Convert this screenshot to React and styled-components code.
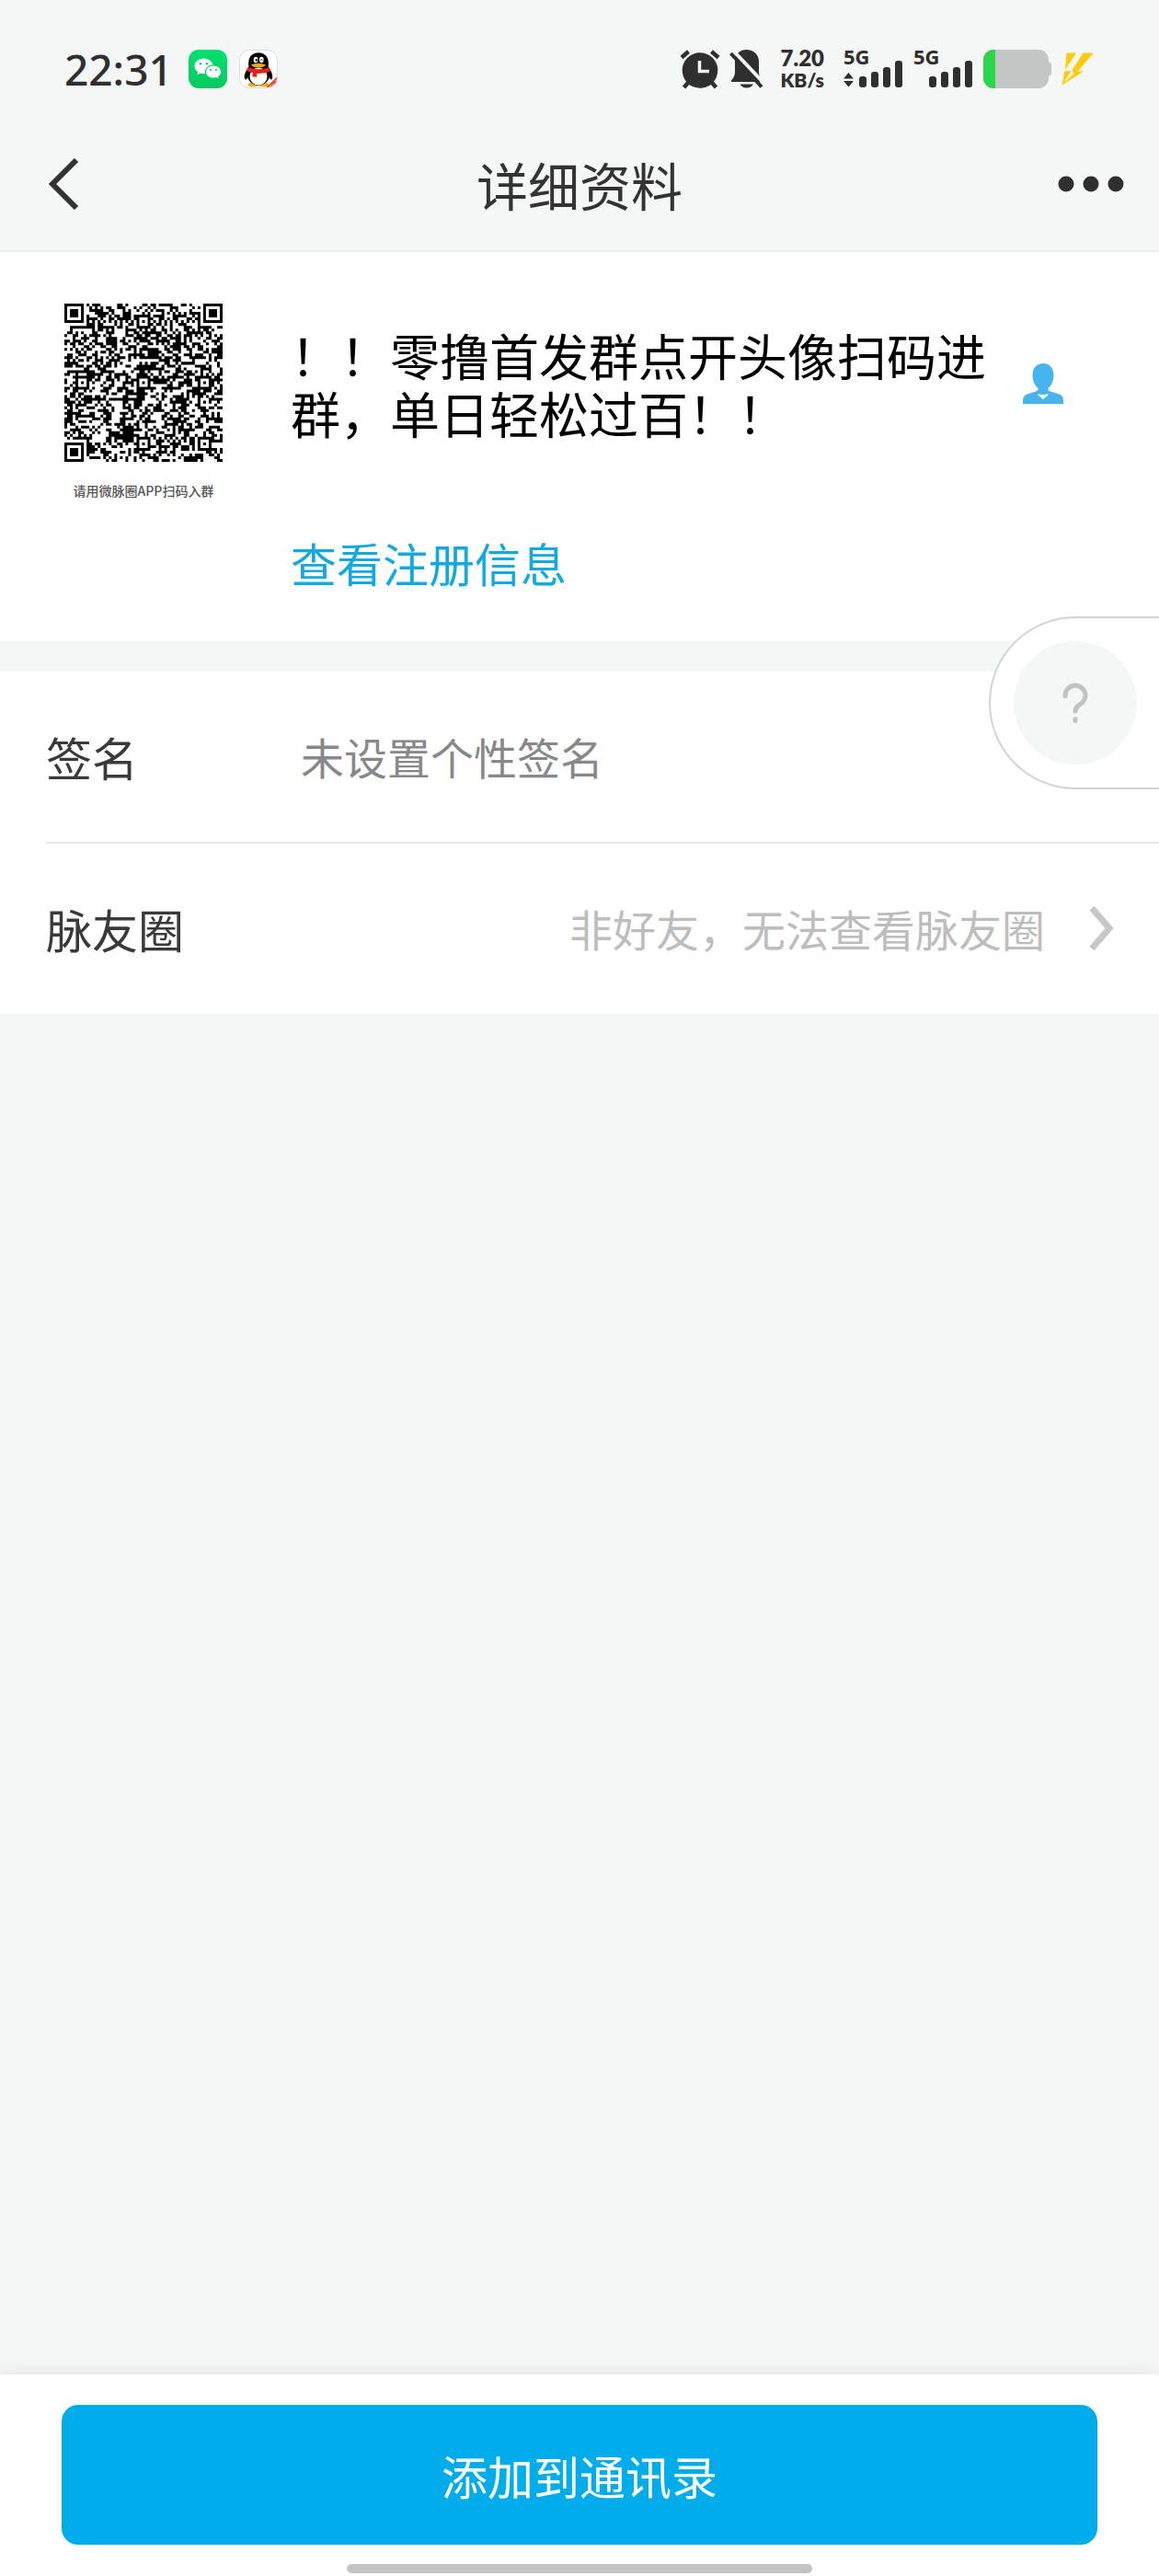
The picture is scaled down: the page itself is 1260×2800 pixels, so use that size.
import React from "react";
import styled, { createGlobalStyle } from "styled-components";

const QR_SIZE = 57;
const ALIGN = [6, 28, 50];
const DARK_BLOCKS = [
  [21, 44, 4, 6],
  [30, 16, 4, 4],
  [15, 12, 4, 3],
  [26, 30, 3, 5],
  [21, 3, 3, 4],
  [27, 22, 4, 2],
];
const LIGHT_BLOCKS = [
  [18, 9, 4, 3],
  [24, 20, 10, 1],
  [10, 47, 5, 3],
  [18, 35, 3, 4],
];

const ring = (x, y, cx, cy) => Math.max(Math.abs(x - cx), Math.abs(y - cy));

const inBlock = (x, y, blocks) =>
  blocks.some(([bx, by, w, h]) => x >= bx && x < bx + w && y >= by && y < by + h);

const buildQr = () => {
  let seed = 20731;
  let path = "";
  const corners = [
    [3, 3],
    [QR_SIZE - 4, 3],
    [3, QR_SIZE - 4],
  ];

  for (let y = 0; y < QR_SIZE; y++) {
    for (let x = 0; x < QR_SIZE; x++) {
      seed = (seed * 48271) % 2147483647;
      let dark = (seed >> 8) % 100 < 51;
      if (inBlock(x, y, DARK_BLOCKS)) dark = true;
      if (inBlock(x, y, LIGHT_BLOCKS)) dark = false;
      if (x === 6 || y === 6) dark = (x + y) % 2 === 0;

      ALIGN.forEach((ax) =>
        ALIGN.forEach((ay) => {
          const d = ring(x, y, ax, ay);
          if (d <= 2) dark = d !== 1;
        })
      );
      corners.forEach(([cx, cy]) => {
        const d = ring(x, y, cx, cy);
        if (d <= 4) dark = d !== 4 && d !== 2;
      });

      if (dark) path += `M${x} ${y}h1v1h-1z`;
    }
  }
  return path;
};

const qrPath = buildQr();

const WechatIcon = () => (
  <svg width="42" height="42" viewBox="0 0 42 42" aria-hidden="true">
    <defs>
      <linearGradient id="wechat" x1="0" y1="0" x2="0" y2="1">
        <stop offset="0" stopColor="#04e06e" />
        <stop offset="1" stopColor="#07c95f" />
      </linearGradient>
    </defs>
    <rect width="42" height="42" rx="11" fill="url(#wechat)" />
    <path d="M16.500 9.500c-5.600 0-10 3.700-10 8.300 0 2.600 1.400 4.900 3.600 6.400l-.9 3.100 3.500-1.900c1.200.4 2.500.6 3.800.6 5.600 0 10-3.700 10-8.200s-4.400-8.300-10-8.300z" fill="#fff" />
    <path d="M27 16.800c4.900 0 8.700 3.200 8.700 7.200 0 2.200-1.200 4.200-3 5.500l.7 2.700-3-1.500c-1.100.3-2.200.5-3.400.5-4.800 0-8.600-3.200-8.600-7.200s3.800-7.200 8.600-7.200z" fill="#fff" stroke="#07d264" strokeWidth="1.200" />
    <g fill="#07d264">
      <circle cx="13" cy="15.200" r="1.300" />
      <circle cx="20" cy="15.200" r="1.300" />
      <circle cx="24" cy="22" r="1.100" />
      <circle cx="30" cy="22" r="1.100" />
    </g>
  </svg>
);

const QqIcon = () => (
  <svg width="42" height="42" viewBox="0 0 42 42" aria-hidden="true">
    <defs>
      <clipPath id="qqClip">
        <rect x="1" y="1" width="40" height="40" rx="10" />
      </clipPath>
    </defs>
    <rect x=".5" y=".5" width="41" height="41" rx="10.500" fill="#fff" stroke="#dcdcdc" />
    <g clipPath="url(#qqClip)">
      <ellipse cx="15.500" cy="38" rx="6" ry="2.300" fill="#f9a80c" />
      <ellipse cx="26.500" cy="38" rx="6" ry="2.300" fill="#f9a80c" />
      <path d="M10.200 19C6 24.500 5 29 6.200 32c.8 1.200 2.600-.6 3.800-2.600h22c1.200 2 3 3.800 3.800 2.600 1.200-3 .2-7.500-4-13z" fill="#050505" />
      <ellipse cx="21" cy="28" rx="12" ry="10.500" fill="#050505" />
      <path d="M10.200 19.500V14C10.200 7.500 14.800 3.300 21 3.300S31.800 7.500 31.800 14v5.500z" fill="#050505" />
      <ellipse cx="21" cy="29" rx="9.500" ry="9.500" fill="#fff" />
      <ellipse cx="18" cy="11" rx="2.300" ry="3.300" fill="#fff" />
      <ellipse cx="24.300" cy="11" rx="2.300" ry="3.300" fill="#fff" />
      <ellipse cx="18.700" cy="11.300" rx="1" ry="1.500" />
      <path d="M23 11.500q1.200-2 2.500 0" stroke="#000" strokeWidth=".9" fill="none" />
      <path d="M12.800 16.500q8.200-3.500 16.400 0-2.400 3-8.200 3t-8.200-3z" fill="#f9a80c" />
      <path d="M9.300 19q11.700 4.600 23.400 0l1.300 4.200q-6 2.900-14.800 2.700v3.800l-4.800-.5.200-4.200q-3.600-.7-6.500-2z" fill="#e3201b" />
      <path d="M42 28.500V42H28.500z" fill="#e5442f" />
      <path d="M33 40l2-2m0 2.500l2.500-4m-.5 3l3-3.500m-1.500-1.500l2-2" stroke="#fff" strokeOpacity=".6" strokeWidth=".9" />
    </g>
  </svg>
);

const AlarmIcon = () => (
  <svg width="44" height="44" viewBox="0 0 44 44" aria-hidden="true">
    <circle cx="22" cy="23.500" r="19.300" fill="#2f2f2f" />
    <path d="M2 9.500L9.500 3M42 9.500L34.500 3M9 37l-4.500 5M35 37l4.500 5" stroke="#2f2f2f" strokeWidth="4.500" />
    <path d="M21.500 13v11.500H32" fill="none" stroke="#f4f7f6" strokeWidth="3.500" />
  </svg>
);

const MutedBellIcon = () => (
  <svg width="38" height="44" viewBox="0 0 38 44" aria-hidden="true">
    <path d="M18.500 1C25 1 32 5 32 14v10c0 5 1 7 5 11.500v.5H2v-1.500C6 30 6 27 6 24V14C6 5 12 1 18.500 1z" fill="#2f2f2f" />
    <path d="M11.500 38.500h14.500c-1.600 2.700-4 4-7.300 4s-5.700-1.300-7.200-4z" fill="#2f2f2f" />
    <path d="M4.500 2.500l34 36" stroke="#f4f7f6" strokeWidth="4" />
    <path d="M1.500 5l33.500 36.500" stroke="#2f2f2f" strokeWidth="4" />
  </svg>
);

const SignalIcon = ({ active }) => (
  <svg width="66" height="60" viewBox="0 -8 66 60" role="img" aria-label="5G">
    <SignalText x="0" y="17">5G</SignalText>
    {active && <path d="M0 32.500l5.500-6.500 5.500 6.500zM0 35h11l-5.500 6.500z" fill="#2f2f2f" />}
    <g fill="#2f2f2f">
      <rect x="17" y="30" width="8" height="12" rx="3" />
      <rect x="30" y="25" width="8" height="17" rx="3" />
      <rect x="43" y="20" width="8" height="22" rx="3" />
      <rect x="56" y="13" width="8" height="29" rx="3" />
    </g>
  </svg>
);

const BatteryIcon = () => (
  <svg width="75" height="42" viewBox="0 0 75 42" aria-hidden="true">
    <defs>
      <clipPath id="battery">
        <rect width="71" height="42" rx="11" />
      </clipPath>
    </defs>
    <path d="M69 13q5 0 5 4v8q0 4-5 4z" fill="#c4c6c5" />
    <g clipPath="url(#battery)">
      <rect width="71" height="42" fill="#c4c6c5" />
      <rect width="13" height="42" fill="#2bd64b" />
    </g>
  </svg>
);

const BoltIcon = () => (
  <svg width="36" height="36" viewBox="0 0 36 36" aria-hidden="true">
    <path d="M5.500.5H16L4 19zM23.500.5H35L17.500 20.500H24L.5 35.500 3.500 20.500h7z" fill="#fecb0a" />
    <path d="M1.500 33.500L11 19l2.500 4z" fill="#f4f7f6" />
    <path d="M1.500 33.500l9-13H3.800z" fill="#fecb0a" />
  </svg>
);

const App = () => {
  return (
    <Page>
      <GlobalStyle />
      <StatusBar>
        <StatusGroup $gap="13px">
          <Time>22:31</Time>
          <WechatIcon />
          <QqIcon />
        </StatusGroup>
        <StatusGroup $gap="10px">
          <AlarmIcon />
          <MutedBellIcon />
          <Speed>
            <span>7.20</span>
            <small>KB/s</small>
          </Speed>
          <SignalIcon active />
          <SignalIcon />
          <BatteryIcon />
          <BoltIcon />
        </StatusGroup>
      </StatusBar>

      <Header>
        <IconButton aria-label="返回">
          <svg width="48" height="56" viewBox="-14 0 48 56">
            <path d="M31 2L5 28l26 26" fill="none" stroke="#333" strokeWidth="6" />
          </svg>
        </IconButton>
        <Title>详细资料</Title>
        <IconButton $end aria-label="更多">
          <svg width="72" height="18" viewBox="0 0 72 18" fill="#2f2f2f">
            <circle cx="9" cy="9" r="8.500" />
            <circle cx="36" cy="9" r="8.500" />
            <circle cx="63" cy="9" r="8.500" />
          </svg>
        </IconButton>
      </Header>

      <Profile>
        <Avatar>
          <svg width="172" height="172" viewBox="0 0 57 57" aria-hidden="true">
            <path d={qrPath} fill="#000" />
          </svg>
          <Caption>请用微脉圈APP扫码入群</Caption>
        </Avatar>
        <Info>
          <NameRow>
            <Name>！！零撸首发群点开头像扫码进群，单日轻松过百！！</Name>
            <svg width="44" height="44" viewBox="0 0 44 44" aria-hidden="true">
              <path d="M22 0c7 0 11.500 5 11.500 13 0 6-2.500 11-6 14v5.500h-11V27c-3.500-3-6-8-6-14C10.500 5 15 0 22 0z" fill="#47b4ee" />
              <path d="M0 44v-3c0-5 2-7 6-8l8-2.500c2-.6 3-1.500 3-3h10c0 1.500 1 2.400 3 3l8 2.500c4 1 6 3 6 8v3z" fill="#47b4ee" />
              <path d="M16.500 33q5.500 2 11 0v1.500l-5.500 4.500-5.500-4.500z" fill="#fff" />
            </svg>
          </NameRow>
          <InfoLink href="#register">查看注册信息</InfoLink>
        </Info>
      </Profile>

      <List>
        <Row>
          <Label>签名</Label>
          <Value>未设置个性签名</Value>
        </Row>
        <Row>
          <Label>脉友圈</Label>
          <Hint>非好友，无法查看脉友圈</Hint>
          <svg width="28" height="48" viewBox="0 0 28 48" aria-hidden="true">
            <path d="M3 2l19 22L3 46" fill="none" stroke="#c8c8c8" strokeWidth="7" />
          </svg>
        </Row>
        <HelpButton aria-label="帮助">
          <HelpCircle>
            <svg width="28" height="44" viewBox="0 0 28 44" aria-hidden="true">
              <path d="M3 14.500C3 8 8 3 14 3s11 5 11 11c0 5-3 8-6.500 10.200C15.500 26 14 27.500 14 31" fill="none" stroke="#c2c2c2" strokeWidth="5" strokeLinecap="round" />
              <rect x="11.500" y="37" width="5" height="7" rx="2.500" fill="#c2c2c2" />
            </svg>
          </HelpCircle>
        </HelpButton>
      </List>

      <Footer>
        <AddButton>添加到通讯录</AddButton>
        <HomeBar />
      </Footer>
    </Page>
  );
};

export default App;

const GlobalStyle = createGlobalStyle`
  * {
    box-sizing: border-box;
  }

  body {
    margin: 0;
    background: #f4f7f6;
    font-family: "Noto Sans CJK SC", sans-serif;
  }

  button {
    border: none;
    padding: 0;
    font-family: inherit;
    cursor: pointer;
  }

  svg {
    display: block;
    flex-shrink: 0;
  }
`;

const Page = styled.div`
  display: flex;
  flex-direction: column;
  min-height: 100vh;
  overflow-x: hidden;
`;

const StatusBar = styled.div`
  display: flex;
  align-items: center;
  justify-content: space-between;
  height: 132px;
  padding: 18px 70px 0;
`;

const StatusGroup = styled.div`
  display: flex;
  align-items: center;
  gap: ${(props) => props.$gap};
`;

const Time = styled.span`
  margin-right: 4px;
  font-family: "Noto Sans", sans-serif;
  font-size: 46px;
  font-weight: 500;
  line-height: 42px;
  color: #2f2f2f;
`;

const Speed = styled.div`
  display: flex;
  flex-direction: column;
  align-items: center;
  margin: 0 11px 0 8px;
  font-family: Lato, sans-serif;
  font-weight: 800;
  line-height: 24px;
  color: #2f2f2f;

  span {
    font-size: 24px;
  }

  small {
    font-size: 21px;
  }
`;

const SignalText = styled.text`
  font-family: "Noto Sans", sans-serif;
  font-size: 22px;
  font-weight: 700;
  fill: #2f2f2f;
`;

const Header = styled.header`
  display: grid;
  grid-template-columns: 1fr auto 1fr;
  align-items: center;
  height: 142px;
  padding: 0 38px 4px;
  border-bottom: 2px solid #ebebeb;
`;

const IconButton = styled.button`
  display: flex;
  align-items: center;
  justify-self: ${(props) => (props.$end ? "end" : "start")};
  background: none;
`;

const Title = styled.h1`
  margin: 0;
  font-size: 56px;
  font-weight: 400;
  line-height: 64px;
  color: #333;
`;

const Profile = styled.section`
  display: flex;
  padding: 56px 104px 50px 70px;
  background: #fff;
`;

const Avatar = styled.div`
  display: flex;
  flex-direction: column;
  align-items: center;
  gap: 20px;
  width: 172px;
  margin-right: 74px;
`;

const Caption = styled.span`
  font-size: 14px;
  font-weight: 500;
  line-height: 22px;
  white-space: nowrap;
  color: #555;
`;

const Info = styled.div`
  display: flex;
  flex: 1;
  flex-direction: column;
  align-items: flex-start;
  gap: 96px;
  padding-top: 24px;
`;

const NameRow = styled.div`
  display: flex;
  align-items: center;
  justify-content: space-between;
  gap: 36px;
  width: 100%;
`;

const Name = styled.h2`
  margin: 0;
  font-size: 54px;
  font-weight: 400;
  line-height: 63px;
  line-break: anywhere;
  color: #000;
`;

const InfoLink = styled.a`
  font-size: 50px;
  line-height: 70px;
  color: #12a8e0;
  text-decoration: none;
`;

const List = styled.section`
  position: relative;
  margin-top: 34px;
  padding-left: 50px;
  background: #fff;
`;

const Row = styled.div`
  display: flex;
  align-items: center;
  height: 185px;
  padding: 0 48px 2px 0;

  & + & {
    height: 187px;
    border-top: 2px solid #e5e6e6;
  }
`;

const Label = styled.span`
  width: 277px;
  font-size: 50px;
  line-height: 70px;
  color: #3a3a3a;
`;

const Value = styled.span`
  font-size: 47px;
  line-height: 70px;
  color: #888;
`;

const Hint = styled.span`
  margin: 0 48px 0 auto;
  font-size: 47px;
  line-height: 70px;
  color: #bdbdbd;
`;

const HelpButton = styled.button`
  position: absolute;
  top: -60px;
  right: 0;
  display: flex;
  align-items: center;
  width: 185px;
  height: 188px;
  padding-left: 25px;
  border: 2px solid #d4d4d4;
  border-right: none;
  border-radius: 94px 0 0 94px;
  background: #fff;
`;

const HelpCircle = styled.span`
  display: flex;
  align-items: center;
  justify-content: center;
  width: 134px;
  height: 134px;
  border-radius: 50%;
  background: #f4f7f6;
`;

const Footer = styled.footer`
  display: flex;
  flex-direction: column;
  align-items: center;
  margin-top: auto;
  padding: 33px 67px 3px;
  background: #fff;
  box-shadow: 0 0 20px rgba(0, 0, 0, 0.09);
`;

const AddButton = styled.button`
  width: 100%;
  height: 152px;
  border-radius: 18px;
  background: #00adea;
  font-size: 50px;
  color: #fff;
`;

const HomeBar = styled.div`
  width: 45%;
  height: 10px;
  margin-top: 21px;
  border-radius: 5px;
  background: #c3c3c3;
`;
